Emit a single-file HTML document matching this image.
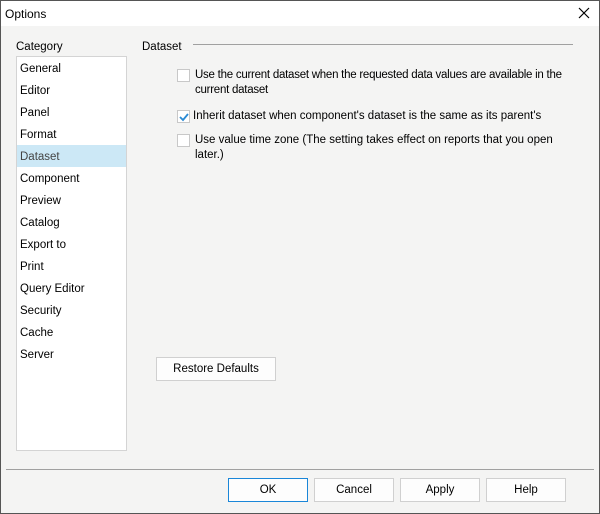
<!DOCTYPE html>
<html><head><style>
*{margin:0;padding:0;box-sizing:border-box}
body{width:600px;height:514px;background:#f4f4f3;font-family:"Liberation Sans",sans-serif;font-size:11.5px;color:#000;position:relative;overflow:hidden}
.a{position:absolute;white-space:nowrap}
.title{position:absolute;left:0;top:0;width:600px;height:26px;background:#fff}
.list{position:absolute;left:16px;top:56px;width:111px;height:395px;background:#fff;border:1px solid #d4d4d4}
.item{position:absolute;left:0;width:109px;height:22px;line-height:24px;padding-left:3px}
.sel{background:#cce8f6;color:#444}
.cb{position:absolute;width:13px;height:13px;border:1px solid #c8c8c8;background:#fff}
.btn{position:absolute;height:24px;background:#fdfdfd;border:1px solid #d0d0d0;text-align:center;line-height:23px}
.frame{position:absolute;left:0;top:0;width:600px;height:514px;border:1px solid #555;pointer-events:none}
</style></head><body>
<div class="title"><div class="a" style="left:5px;top:7px;font-size:12px">Options</div>
<svg class="a" style="left:578px;top:7px" width="12" height="12"><path d="M1 1L11 11M11 1L1 11" stroke="#000" stroke-width="1.2"/></svg></div>
<div class="a" style="left:16px;top:41px">Category</div>
<div class="list">
<div class="item" style="top:0">General</div>
<div class="item" style="top:22px">Editor</div>
<div class="item" style="top:44px">Panel</div>
<div class="item" style="top:66px">Format</div>
<div class="item sel" style="top:88px">Dataset</div>
<div class="item" style="top:110px">Component</div>
<div class="item" style="top:132px">Preview</div>
<div class="item" style="top:154px">Catalog</div>
<div class="item" style="top:176px">Export to</div>
<div class="item" style="top:198px">Print</div>
<div class="item" style="top:220px">Query Editor</div>
<div class="item" style="top:242px">Security</div>
<div class="item" style="top:264px">Cache</div>
<div class="item" style="top:286px">Server</div>
</div>
<div class="a" style="left:142px;top:41px">Dataset</div>
<div class="a" style="left:193px;top:44px;width:380px;height:1px;background:#a0a0a0"></div>
<div class="cb" style="left:177px;top:69px"></div>
<div class="a" style="left:195px;top:68px;line-height:15px;letter-spacing:-0.25px">Use the current dataset when the requested data values are available in the<br>current dataset</div>
<div class="cb" style="left:177px;top:110px"></div>
<svg class="a" style="left:178px;top:111px" width="12" height="12"><path d="M2 6L5 9L10 3" stroke="#2a8ad4" stroke-width="1.8" fill="none"/></svg>
<div class="a" style="left:193px;top:110px">Inherit dataset when component's dataset is the same as its parent's</div>
<div class="cb" style="left:177px;top:134px"></div>
<div class="a" style="left:195px;top:133px;line-height:15px">Use value time zone (The setting takes effect on reports that you open<br>later.)</div>
<div class="btn" style="left:156px;top:357px;width:120px">Restore Defaults</div>
<div class="a" style="left:6px;top:469px;width:588px;height:1px;background:#a0a0a0"></div>
<div class="btn" style="left:228px;top:478px;width:80px;border-color:#1a86d8">OK</div>
<div class="btn" style="left:314px;top:478px;width:80px">Cancel</div>
<div class="btn" style="left:400px;top:478px;width:80px">Apply</div>
<div class="btn" style="left:486px;top:478px;width:80px">Help</div>
<div class="frame"></div>
</body></html>
